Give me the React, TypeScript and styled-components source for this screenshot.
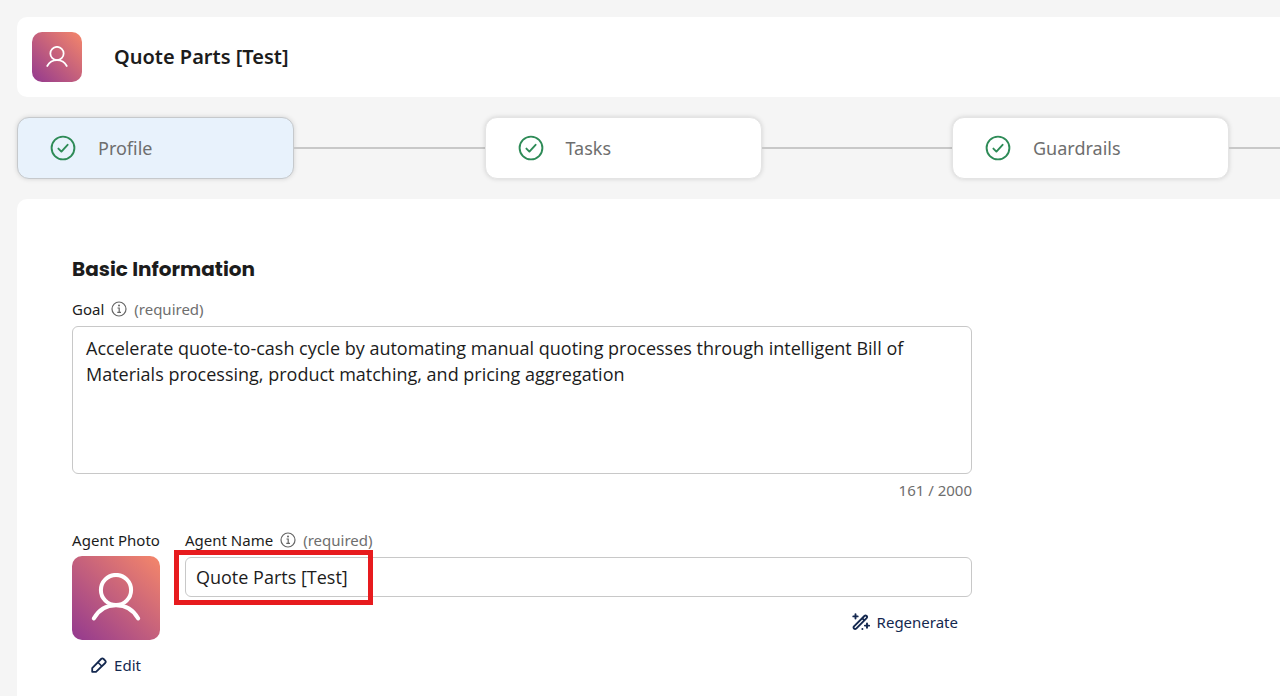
import React from "react";
import styled, { createGlobalStyle } from "styled-components";

const GlobalStyle = createGlobalStyle`
  *, *::before, *::after { box-sizing: border-box; }
  body {
    margin: 0;
    background: #f5f5f5;
    color: #1c1c1c;
    font-family: "Noto Sans", sans-serif;
    font-size: 15px;
    line-height: 20px;
    overflow-x: hidden;
  }
  button, input, textarea { font: inherit; color: inherit; }
`;

const Page = styled.div`
  display: flex;
  flex-direction: column;
  gap: 20px;
  min-height: 100vh;
  padding: 17px 0 0 17px;
`;

const Header = styled.header`
  display: flex;
  align-items: center;
  gap: 32px;
  height: 80px;
  padding: 0 15px;
  background: #fff;
  border-radius: 10px 0 0 10px;
`;

const Title = styled.h1`
  margin: 0;
  font-size: 20px;
  line-height: 28px;
  font-weight: 600;
`;

const Avatar = styled.div<{ $large?: boolean }>`
  display: flex;
  align-items: center;
  justify-content: center;
  width: ${(p) => (p.$large ? "88px" : "50px")};
  height: ${(p) => (p.$large ? "84px" : "50px")};
  border-radius: 10px;
  background: linear-gradient(to top right, #93398f, #f5876a);
  color: #fff;
`;

const Steps = styled.nav`
  display: flex;
  align-items: center;
`;

const Step = styled.button<{ $active?: boolean }>`
  display: flex;
  align-items: center;
  gap: 22px;
  flex: 0 0 277px;
  height: 62px;
  padding: 0 32px;
  border: 1px solid ${(p) => (p.$active ? "#c6c9cc" : "#e4e4e4")};
  border-radius: 12px;
  background: ${(p) => (p.$active ? "#e8f2fc" : "#fff")};
  box-shadow: 0 0 5px rgba(0, 0, 0, 0.14);
  color: #6e6e6e;
  font-size: 18px;
  line-height: 24px;
  cursor: pointer;
`;

const Connector = styled.span<{ $last?: boolean }>`
  flex: ${(p) => (p.$last ? "0 0 51px" : "1 1 0")};
  height: 2px;
  background: #c8c8c8;
`;

const Panel = styled.main`
  flex: 1;
  padding: 56px 55px 20px;
  background: #fff;
  border-radius: 10px 0 0 0;
`;

const Form = styled.form`
  max-width: 900px;
`;

const SectionTitle = styled.h2`
  margin: 0 0 16px;
  font-family: Poppins, Inter, sans-serif;
  font-size: 20px;
  line-height: 28px;
  font-weight: 700;
`;

const LabelRow = styled.div`
  display: flex;
  align-items: center;
  gap: 7px;
  height: 20px;
`;

const Muted = styled.span`
  color: #6e6e6e;
`;

const GoalBox = styled.textarea`
  display: block;
  width: 100%;
  height: 148px;
  margin-top: 7px;
  padding: 8px 13px;
  border: 1px solid #c8c8c8;
  border-radius: 6px;
  background: #fff;
  font-family: "Open Sans", "Noto Sans", sans-serif;
  font-size: 18px;
  line-height: 26px;
  resize: none;
`;

const Counter = styled.div`
  margin: 6px 0 30px;
  color: #6e6e6e;
  text-align: right;
`;

const AgentRow = styled.div`
  display: flex;
  gap: 25px;
`;

const PhotoColumn = styled.div`
  display: flex;
  flex-direction: column;
  align-items: center;
  gap: 6px;
  flex: 0 0 88px;
  white-space: nowrap;
`;

const NameColumn = styled.div`
  flex: 1;
`;

const NameField = styled.div`
  position: relative;
  margin: 7px 0 15px;
`;

const NameInput = styled.input`
  display: block;
  width: 100%;
  height: 40px;
  padding: 0 10px;
  border: 1px solid #c8c8c8;
  border-radius: 6px;
  background: #fff;
  font-family: "Open Sans", "Noto Sans", sans-serif;
  font-size: 18px;
`;

const Highlight = styled.span`
  position: absolute;
  top: -7px;
  left: -11px;
  width: 199px;
  height: 55px;
  border: 5px solid #e71b1e;
  pointer-events: none;
`;

const TextButton = styled.button`
  display: flex;
  align-items: center;
  gap: 7px;
  padding: 0;
  border: 0;
  background: none;
  color: #14284f;
  cursor: pointer;
`;

const EditSlot = styled.div`
  padding-top: 9px;
`;

const RegenerateSlot = styled.div`
  display: flex;
  justify-content: flex-end;
  padding-right: 14px;
`;

const PersonIcon = ({ size, stroke }: { size: number; stroke: number }) => (
  <svg width={size} height={size} viewBox="0 0 50 50" fill="none" stroke="currentColor" strokeWidth={stroke} strokeLinecap="round" aria-hidden="true">
    <circle cx="25" cy="17" r="15.1" />
    <path d="M2.8 45.5C7.5 37 15.5 32.2 25 32.2S42.5 37 47.2 45.5" />
  </svg>
);

const CheckIcon = () => (
  <svg width="26" height="26" viewBox="0 0 26 26" fill="none" stroke="#2e8b57" strokeLinecap="round" strokeLinejoin="round" aria-hidden="true">
    <circle cx="13" cy="13" r="11.4" strokeWidth="1.9" />
    <path d="M8.4 13.6L11.4 16.6L17.6 9.8" strokeWidth="1.9" />
  </svg>
);

const InfoIcon = () => (
  <svg width="16" height="16" viewBox="0 0 16 16" fill="none" stroke="#666" strokeWidth="1.2" aria-hidden="true">
    <circle cx="8" cy="8" r="7" />
    <path d="M6.5 7H8.2V11.4M6.3 11.4H10" />
    <circle cx="8" cy="4.6" r="1" fill="#666" stroke="none" />
  </svg>
);

const PencilIcon = () => (
  <svg width="16" height="16" viewBox="0 0 16 16" fill="none" stroke="currentColor" strokeWidth="1.8" strokeLinejoin="round" aria-hidden="true">
    <path d="M1.2 14.8V11.1L10.1 2Q11.4 0.8 12.6 2L14.2 3.6Q15.3 4.8 14.2 6L5 14.8Z" />
    <path d="M6.9 5.3L10.9 9.3" strokeWidth="1.6" />
  </svg>
);

const WandIcon = () => (
  <svg width="18" height="18" viewBox="0 0 18 18" fill="none" stroke="currentColor" strokeLinecap="round" strokeLinejoin="round" aria-hidden="true">
    <path d="M2 13.4L12.4 3Q13.5 2.1 14.6 3Q15.6 4.1 14.6 5.2L4.2 15.6Q3.1 16.6 2 15.6Q1.1 14.5 2 13.4ZM10.2 5.2L12.4 7.4" strokeWidth="1.9" />
    <path d="M3.5 1.2V5.6M1.3 3.4H5.7M15 10.5V14.7M12.9 12.6H17.1" strokeWidth="1.9" />
    <circle cx="10.4" cy="16" r="1" fill="currentColor" stroke="none" />
  </svg>
);

const steps = ["Profile", "Tasks", "Guardrails"];

const goal =
  "Accelerate quote-to-cash cycle by automating manual quoting processes through intelligent Bill of Materials processing, product matching, and pricing aggregation";

export default function App() {
  return (
    <>
      <GlobalStyle />
      <Page>
        <Header>
          <Avatar>
            <PersonIcon size={22} stroke={4} />
          </Avatar>
          <Title>Quote Parts [Test]</Title>
        </Header>
        <Steps aria-label="Agent setup">
          {steps.map((name, i) => (
            <React.Fragment key={name}>
              <Step type="button" $active={i === 0}>
                <CheckIcon />
                {name}
              </Step>
              <Connector $last={i === steps.length - 1} />
            </React.Fragment>
          ))}
        </Steps>
        <Panel>
          <Form>
            <SectionTitle>Basic Information</SectionTitle>
            <LabelRow>
              <label htmlFor="goal">Goal</label>
              <InfoIcon />
              <Muted>(required)</Muted>
            </LabelRow>
            <GoalBox id="goal" maxLength={2000} defaultValue={goal} spellCheck={false} />
            <Counter>161 / 2000</Counter>
            <AgentRow>
              <PhotoColumn>
                <span>Agent Photo</span>
                <Avatar $large>
                  <PersonIcon size={50} stroke={4} />
                </Avatar>
                <EditSlot>
                  <TextButton type="button">
                    <PencilIcon />
                    Edit
                  </TextButton>
                </EditSlot>
              </PhotoColumn>
              <NameColumn>
                <LabelRow>
                  <label htmlFor="agent-name">Agent Name</label>
                  <InfoIcon />
                  <Muted>(required)</Muted>
                </LabelRow>
                <NameField>
                  <NameInput id="agent-name" type="text" defaultValue="Quote Parts [Test]" spellCheck={false} />
                  <Highlight />
                </NameField>
                <RegenerateSlot>
                  <TextButton type="button">
                    <WandIcon />
                    Regenerate
                  </TextButton>
                </RegenerateSlot>
              </NameColumn>
            </AgentRow>
          </Form>
        </Panel>
      </Page>
    </>
  );
}
